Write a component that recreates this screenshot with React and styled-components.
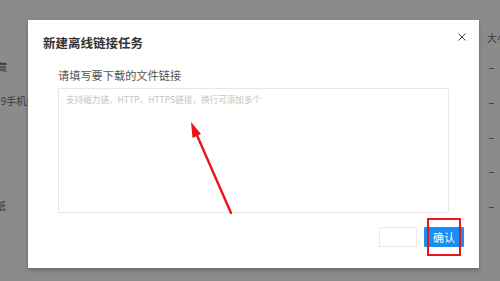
import React from "react";
import styled, { createGlobalStyle } from "styled-components";

const Global = createGlobalStyle`
  html, body { margin: 0; padding: 0; }
  body {
    width: 500px;
    height: 281px;
    overflow: hidden;
    background: #8b8b8b;
    font-family: "Noto Sans CJK SC", "Noto Sans", sans-serif;
  }
`;

const Page = styled.div`
  position: relative;
  width: 500px;
  height: 281px;
  overflow: hidden;
  display: flex;
  justify-content: space-between;
`;

const NameCol = styled.div`
  width: 40px;
  padding-top: 49.6px;
  display: flex;
  flex-direction: column;
  overflow: hidden;
`;

const SizeCol = styled.div`
  width: 13px;
  padding-top: 30px;
  display: flex;
  flex-direction: column;
  overflow: hidden;
`;

const Head = styled.div`
  height: 16px;
  line-height: 16px;
  font-size: 10px;
  color: #3a3a3a;
  white-space: nowrap;
  margin-bottom: 14px;
`;

const Cell = styled.div`
  height: 34.8px;
  line-height: 34.8px;
  font-size: 10px;
  color: #3a3a3a;
  white-space: nowrap;
  span {
    display: inline-block;
    margin-left: ${(p) => p.$shift || 0}px;
  }
`;

const Dash = styled.div`
  height: 34.8px;
  padding-top: 8px;
  box-sizing: border-box;
  padding-left: 2px;
  &::before {
    content: "";
    display: block;
    width: 5px;
    height: 1px;
    background: #4a4a4a;
  }
`;

const Overlay = styled.div`
  position: absolute;
  inset: 0;
  padding: 20px 0 0 28px;
`;

const Dialog = styled.div`
  width: 451px;
  height: 248px;
  box-sizing: border-box;
  background: #fff;
  box-shadow: 0 2px 4px rgba(0, 0, 0, 0.25);
  padding: 15px 15px 0 15px;
  display: flex;
  flex-direction: column;
`;

const Header = styled.div`
  display: flex;
  justify-content: space-between;
  align-items: flex-start;
  height: 16px;
`;

const Title = styled.div`
  font-size: 12.5px;
  line-height: 16px;
  font-weight: 700;
  color: #333;
`;

const Close = styled.div`
  width: 8px;
  height: 8px;
  margin-top: -2px;
  margin-right: -2px;
  display: flex;
  svg { display: block; }
`;

const Body = styled.div`
  padding: 0 15px;
  display: flex;
  flex-direction: column;
`;

const Label = styled.div`
  margin-top: 17px;
  font-size: 11.2px;
  line-height: 14px;
  color: #555;
`;

const Area = styled.textarea`
  margin-top: 6px;
  height: 125px;
  box-sizing: border-box;
  border: 1px solid #e6e6e6;
  border-radius: 1px;
  padding: 4px 7px;
  font-family: "Noto Sans CJK SC", "Noto Sans", sans-serif;
  font-size: 8.6px;
  line-height: 12px;
  resize: none;
  outline: none;
  &::placeholder { color: #c4c4c4; }
`;

const Footer = styled.div`
  margin-top: 14px;
  display: flex;
  justify-content: flex-end;
  gap: 7px;
`;

const Btn = styled.button`
  width: ${(p) => (p.$primary ? 40 : 38)}px;
  height: 20px;
  box-sizing: border-box;
  padding: 0;
  border: 1px solid ${(p) => (p.$primary ? "#1a8cf5" : "#e8e8e8")};
  background: ${(p) => (p.$primary ? "#1a8cf5" : "#fff")};
  color: #fff;
  font-family: "Noto Sans CJK SC", "Noto Sans", sans-serif;
  font-size: 11px;
  line-height: 18px;
  border-radius: 1px;
`;

const RedBox = styled.div`
  position: absolute;
  left: 427px;
  top: 218px;
  width: 34px;
  height: 38px;
  box-sizing: border-box;
  border: 2px solid #e8141e;
`;

const Arrow = styled.svg`
  position: absolute;
  left: 0;
  top: 0;
  pointer-events: none;
`;

export default function App() {
  return (
    <>
      <Global />
      <Page>
        <NameCol>
          <Cell $shift={-13}><span>收藏</span></Cell>
          <Cell $shift={-16}><span>2019手机盘</span></Cell>
          <Cell />
          <Cell />
          <Cell $shift={-14}><span>壁纸</span></Cell>
        </NameCol>
        <SizeCol>
          <Head>大小</Head>
          <Dash />
          <Dash />
          <Dash />
          <Dash />
          <Dash />
        </SizeCol>
        <Overlay>
          <Dialog>
            <Header>
              <Title>新建离线链接任务</Title>
              <Close>
                <svg width="8" height="8" viewBox="0 0 8 8">
                  <path d="M0.5 0.5 L7.5 7.5 M7.5 0.5 L0.5 7.5" stroke="#444" strokeWidth="1" />
                </svg>
              </Close>
            </Header>
            <Body>
              <Label>请填写要下载的文件链接</Label>
              <Area placeholder="支持磁力链、HTTP、HTTPS链接，换行可添加多个" />
            </Body>
            <Footer>
              <Btn />
              <Btn $primary>确认</Btn>
            </Footer>
          </Dialog>
        </Overlay>
        <Arrow width="500" height="281" viewBox="0 0 500 281">
          <line x1="231" y1="213" x2="196" y2="133" stroke="#e8141e" strokeWidth="2.4" strokeLinecap="round" />
          <polygon points="191,122 192.5,138 201,134" fill="#e8141e" />
        </Arrow>
        <RedBox />
      </Page>
    </>
  );
}
